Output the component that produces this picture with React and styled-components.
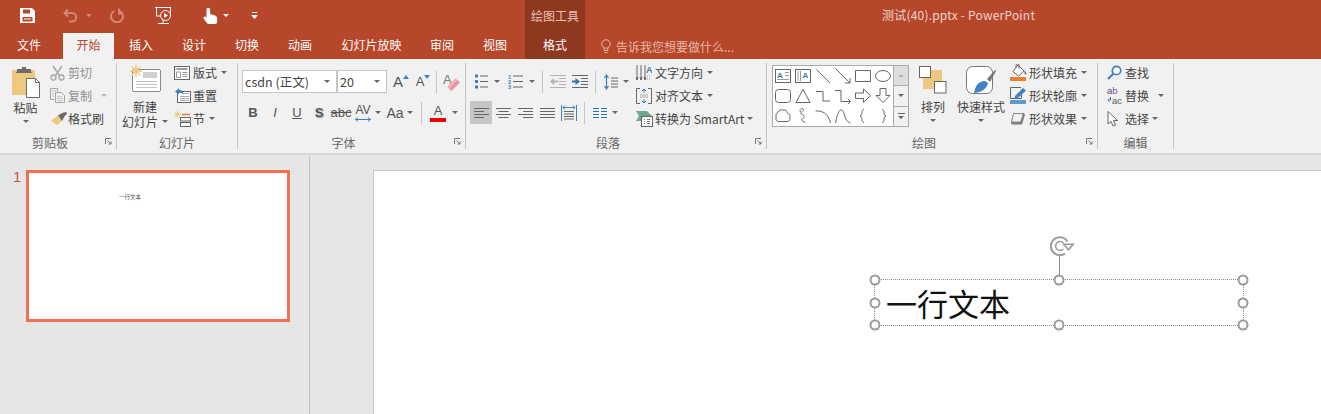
import styled, { createGlobalStyle } from "styled-components";

const RED = "#b7472a";
const INK = "#444";
const BLUE = "#3f7fbf";
const GOLD = "#edc87e";
const ORANGE = "#ed7d31";

const GlobalStyle = createGlobalStyle`
  html, body { margin: 0; padding: 0; background: #e6e6e6; }
  * { box-sizing: border-box; }
  body { font-family: "Noto Sans CJK SC", "Noto Sans", sans-serif; font-size: 12px; color: ${INK}; }
`;

const Page = styled.div`
  width: 1321px;
  height: 414px;
  overflow: hidden;
  display: flex;
  flex-direction: column;
  background: #e6e6e6;
`;

const Header = styled.header`
  height: 59px;
  background: ${RED};
  flex: none;
`;

const TitleRow = styled.div`
  height: 33px;
  display: flex;
`;

const Qat = styled.div`
  width: 525px;
  display: flex;
  align-items: center;
  padding-left: 20px;
  padding-bottom: 2px;
`;

const QatSlot = styled.span`
  display: flex;
  align-items: center;
  margin-left: ${({ $ml }) => $ml || 0}px;
`;

const ContextLabel = styled.div`
  width: 60px;
  background: #8f3820;
  color: #ecc2b4;
  text-align: center;
  line-height: 31px;
`;

const WindowTitle = styled.div`
  padding-left: 297px;
  line-height: 29px;
  letter-spacing: 0.2px;
  color: #f0d3ca;
`;

const TabRow = styled.nav`
  height: 26px;
  display: flex;
  align-items: stretch;
`;

const Tab = styled.div`
  width: ${({ $w }) => $w}px;
  margin-right: ${({ $mr }) => $mr || 0}px;
  text-align: center;
  line-height: 24px;
  color: ${({ $active }) => ($active ? RED : "#fff")};
  background: ${({ $active, $context }) => ($active ? "#f1f1f1" : $context ? "#8f3820" : "transparent")};
`;

const TellMe = styled.div`
  display: flex;
  align-items: center;
  gap: 5px;
  margin-left: 16px;
  color: #e9b7a7;
`;

const Ribbon = styled.div`
  height: 96px;
  flex: none;
  display: flex;
  align-items: flex-start;
  padding-top: 3px;
  background: #f1f1f1;
  border-bottom: 2px solid #d6d6d6;
`;

const Divider = styled.div`
  width: 1px;
  height: 86px;
  margin-top: 1px;
  flex: none;
  background: #c6c6c6;
`;

const Group = styled.section`
  width: ${({ $w }) => $w}px;
  height: 88px;
  flex: none;
  display: flex;
  flex-direction: column;
`;

const GroupBody = styled.div`
  height: 69px;
  display: flex;
  padding-left: ${({ $pl }) => $pl || 0}px;
`;

const GroupFooter = styled.div`
  height: 19px;
  display: flex;
  align-items: flex-end;
`;

const GroupLabel = styled.div`
  flex: 1;
  text-align: center;
  line-height: 14px;
  color: #666;
`;

const Launcher = styled.div`
  width: 16px;
  height: 15px;
  padding-bottom: 3px;
  display: flex;
  align-items: center;
  justify-content: center;
`;

const LargeButton = styled.div`
  width: ${({ $w }) => $w}px;
  margin-left: ${({ $ml }) => $ml || 0}px;
  flex: none;
  display: flex;
  flex-direction: column;
  align-items: center;
  padding-top: ${({ $pt }) => $pt || 4}px;
`;

const LargeIcon = styled.div`
  height: ${({ $h }) => $h}px;
  display: flex;
  align-items: flex-start;
`;

const LargeText = styled.div`
  line-height: 15px;
  white-space: nowrap;
  display: flex;
  align-items: center;
`;

const CaretLine = styled.div`
  height: ${({ $h }) => $h || 12}px;
  display: flex;
  align-items: center;
`;

const SmallColumn = styled.div`
  display: flex;
  flex-direction: column;
  margin-top: -1px;
  margin-left: ${({ $ml }) => $ml || 0}px;
`;

const SmallButton = styled.div`
  height: 23px;
  display: flex;
  align-items: center;
  white-space: nowrap;
  color: ${({ $off }) => ($off ? "#8f8f8f" : INK)};
`;

const Slot = styled.span`
  width: ${({ $w }) => $w || 19}px;
  flex: none;
  display: flex;
  justify-content: flex-start;
  align-items: center;
`;

const Caret = styled.span`
  display: inline-block;
  flex: none;
  width: 0;
  height: 0;
  margin-left: ${({ $ml }) => $ml || 0}px;
  border-left: 3px solid transparent;
  border-right: 3px solid transparent;
  border-top: 3px solid ${({ $color }) => $color || "#666"};
`;

const ToolStack = styled.div`
  display: flex;
  flex-direction: column;
  gap: 8px;
  padding-top: 8px;
  width: ${({ $w }) => ($w ? `${$w}px` : "auto")};
  flex: none;
`;

const ToolRow = styled.div`
  height: 23px;
  display: flex;
  align-items: center;
`;

const Cell = styled.span`
  width: ${({ $w }) => $w || 22}px;
  height: 23px;
  margin-left: ${({ $ml }) => $ml || 0}px;
  flex: none;
  display: flex;
  align-items: center;
  justify-content: center;
  background: ${({ $on }) => ($on ? "#c6c6c6" : "transparent")};
`;

const ToolSep = styled.span`
  width: 1px;
  height: 22px;
  margin-left: ${({ $ml }) => $ml || 0}px;
  flex: none;
  background: #c6c6c6;
`;

const FontBox = styled.div`
  width: ${({ $w }) => $w}px;
  height: 23px;
  flex: none;
  display: flex;
  align-items: center;
  justify-content: space-between;
  padding: 0 6px 0 2px;
  background: #fff;
  border: 1px solid #c6c6c6;
  font-size: 12.5px;
  color: #444;
`;

const Glyph = styled.span`
  font-family: "Liberation Sans", sans-serif;
  font-size: ${({ $size }) => $size || 13}px;
  font-weight: ${({ $bold }) => ($bold ? 700 : 400)};
  font-style: ${({ $italic }) => ($italic ? "italic" : "normal")};
  text-decoration: ${({ $deco }) => $deco || "none"};
  text-shadow: ${({ $shadow }) => ($shadow ? "1px 1px 1px #999" : "none")};
  color: #555;
  line-height: 1;
`;

const TopMark = styled.span`
  display: flex;
  margin-bottom: 9px;
`;

const StackedGlyph = styled.span`
  display: flex;
  flex-direction: column;
  align-items: center;
  gap: 1px;
`;

const Swatch = styled.span`
  width: 16px;
  height: 4px;
  background: ${({ $color }) => $color};
`;

const Gallery = styled.div`
  display: flex;
  margin-top: 3px;
  height: 62px;
  border: 1px solid #ababab;
  flex: none;
`;

const ShapeGrid = styled.div`
  display: grid;
  grid-template-columns: repeat(6, 20px);
  grid-auto-rows: 20px;
  background: #fff;
  width: 121px;
  border-right: 1px solid #ababab;
`;

const ShapeCell = styled.div`
  display: flex;
  align-items: center;
  justify-content: center;
`;

const GalleryScroll = styled.div`
  width: 14px;
  display: flex;
  flex-direction: column;
`;

const ScrollButton = styled.div`
  flex: 1;
  display: flex;
  flex-direction: column;
  align-items: center;
  justify-content: center;
  gap: 2px;
  background: ${({ $off }) => ($off ? "#dedede" : "#f1f1f1")};
  border-bottom: ${({ $last }) => ($last ? "none" : "1px solid #ababab")};
`;

const ScrollBar = styled.span`
  width: 7px;
  height: 1px;
  background: #666;
`;

const UpCaret = styled.span`
  width: 0;
  height: 0;
  border-left: 3px solid transparent;
  border-right: 3px solid transparent;
  border-bottom: 3px solid #b5b5b5;
`;

const Workspace = styled.main`
  flex: 1;
  display: flex;
  min-height: 0;
`;

const ThumbPane = styled.aside`
  width: 310px;
  flex: none;
  display: flex;
  margin-top: 1px;
  padding: 14px 0 0 13px;
  border-right: 1px solid #c2c2c2;
`;

const ThumbNumber = styled.div`
  width: 13px;
  margin-top: -1px;
  font-family: "Liberation Sans", sans-serif;
  font-size: 15px;
  line-height: 15px;
  color: #c8553a;
`;

const Thumb = styled.div`
  width: 264px;
  height: 152px;
  background: #fff;
  border: 3px solid #f0704f;
  padding: 21px 0 0 90px;
  font-size: 5.5px;
  line-height: 6px;
  color: #555;
`;

const Stage = styled.div`
  flex: 1;
  padding: 15px 0 0 63px;
`;

const Slide = styled.div`
  position: relative;
  height: 100%;
  background: #fff;
  border-left: 1px solid #c6c6c6;
  border-top: 1px solid #c6c6c6;
`;

const TextBox = styled.div`
  position: absolute;
  left: 500px;
  top: 108px;
  width: 370px;
  height: 47px;
  border: 1px dotted #8e8e8e;
  padding-left: 11px;
  font-size: 31px;
  line-height: 45px;
  color: #111;
`;

const Handle = styled.span`
  position: absolute;
  left: ${({ $x }) => $x}%;
  top: ${({ $y }) => $y}%;
  width: 11px;
  height: 11px;
  transform: translate(-50%, -50%);
  background: #fff;
  border: 2px solid #999;
  border-radius: 50%;
`;

const RotateStem = styled.span`
  position: absolute;
  left: 50%;
  top: -24px;
  width: 1px;
  height: 20px;
  background: #8e8e8e;
`;

const RotateIcon = styled.span`
  position: absolute;
  left: calc(50% - 9px);
  top: -44px;
  display: flex;
`;

const Svg = ({ w, h, children, ...rest }) => (
  <svg width={w} height={h} viewBox={`0 0 ${w} ${h}`} style={{ display: "block", flex: "none" }} {...rest}>
    {children}
  </svg>
);

const SaveIcon = () => (
  <Svg w={15} h={15}>
    <path d="M0 0h12l3 3v12H0z" fill="#fff" />
    <path d="M3 1.5h7v4H3zM2.5 9h10v4.5h-10z" fill={RED} />
    <path d="M4 10.5h7v1H4z" fill="#fff" />
  </Svg>
);

const UndoIcon = () => (
  <Svg w={15} h={15}>
    <path d="M5 1.5 1.5 5 5 8.5M2 5h7a4 4 0 0 1 0 8.5H6" fill="none" stroke="#d08a75" strokeWidth="2" />
  </Svg>
);

const RedoIcon = () => (
  <Svg w={15} h={15}>
    <path d="M5.5 2.8a6 6 0 1 0 5 0M10 0.5v5h4" fill="none" stroke="#d08a75" strokeWidth="2" />
  </Svg>
);

const ShowIcon = () => (
  <Svg w={17} h={17}>
    <path d="M0 .5h16M1.5 1v8h14V1M8 12v4M3 16.5h11" fill="none" stroke="#fff" />
    <circle cx="10.5" cy="8.5" r="5" fill={RED} stroke="#fff" />
    <path d="M9 6v5l4-2.5z" fill="#fff" />
  </Svg>
);

const TouchIcon = () => (
  <Svg w={15} h={17}>
    <path d="M3.5 8V2.5a1.8 1.8 0 0 1 3.6 0V7l5 1.5c1.5.5 2 1.5 2 3V15c0 1-.7 2-2 2H6c-1 0-1.7-.5-2.3-1.3L.6 11.5C0 10 1.8 9 3 10l.5.5z" fill="#fff" />
  </Svg>
);

const CustomizeIcon = () => (
  <Svg w={7} h={8}>
    <path d="M1 .5h5" stroke="#fff" />
    <path d="M0 3h7L3.5 7z" fill="#fff" />
  </Svg>
);

const BulbIcon = () => (
  <Svg w={10} h={15}>
    <circle cx="5" cy="5" r="4.2" fill="none" stroke="#e9b7a7" />
    <path d="M3.2 9v2.5h3.6V9M3.5 13.5h3" fill="none" stroke="#e9b7a7" />
  </Svg>
);

const LauncherIcon = () => (
  <Svg w={7} h={7}>
    <path d="M.5 6V.5H6" fill="none" stroke="#777" />
    <path d="M2.5 2.5 6 6M6 3.5V6H3.5" fill="none" stroke="#777" />
  </Svg>
);

const PasteIcon = () => (
  <Svg w={30} h={32}>
    <rect x="1" y="4" width="23" height="25" fill={GOLD} />
    <path d="M6 5V3h5V1h4v2h5v2l1 2H5z" fill="#6b6b6b" />
    <path d="M15.5 12.5h9l4 4v15h-13z" fill="#fff" stroke="#6b6b6b" />
    <path d="M24.5 12.5v4h4" fill="none" stroke="#6b6b6b" />
  </Svg>
);

const CutIcon = () => (
  <Svg w={15} h={16}>
    <path d="M3 1l6.5 9.5M12 1 5.5 10.5" fill="none" stroke="#a6a6a6" strokeWidth="1.4" />
    <circle cx="3.5" cy="12.5" r="2.5" fill="none" stroke="#a6a6a6" strokeWidth="1.3" />
    <circle cx="11.5" cy="12.5" r="2.5" fill="none" stroke="#a6a6a6" strokeWidth="1.3" />
  </Svg>
);

const CopyIcon = () => (
  <Svg w={15} h={15}>
    <path d="M.5.5h7v3M.5.5v11h4" fill="none" stroke="#a6a6a6" />
    <path d="M5.5 4.5h6l3 3v7h-9z" fill="#f1f1f1" stroke="#a6a6a6" />
    <path d="M2 3h4M2 5.5h2M2 8h2M7 8.5h5M7 10.5h6M7 12.5h6" stroke="#c4c4c4" />
  </Svg>
);

const PainterIcon = () => (
  <Svg w={17} h={14}>
    <path d="M1 8.5 8 3.5l4 5.5-5 4z" fill={GOLD} />
    <path d="M8 3.5 12 1l4-1 1 1.5-2.5 3L12 9z" fill="#6b6b6b" />
  </Svg>
);

const NewSlideIcon = () => (
  <Svg w={31} h={28}>
    <rect x="2.5" y="4.5" width="28" height="22" rx="1.5" fill="#fff" stroke="#8a8a8a" />
    <rect x="13" y="7" width="14" height="6" fill="#cfcfcf" />
    <path d="M6 16.5h21M6 19.5h21M6 22.5h21" stroke="#c4c4c4" />
    <path d="M6 0v12M0 6h12M1.8 1.8l8.4 8.4M10.2 1.8l-8.4 8.4" stroke={GOLD} strokeWidth="1.6" />
  </Svg>
);

const LayoutIcon = () => (
  <Svg w={16} h={14}>
    <rect x=".5" y=".5" width="15" height="13" fill="#fff" stroke="#666" />
    <path d="M2.5 3h11" stroke="#999" strokeWidth="2" />
    <path d="M2.5 6h4v5.500h-4zM8.5 6.500h5M8.5 8.500h5M8.5 10.500h5" fill="none" stroke="#999" />
  </Svg>
);

const ResetIcon = () => (
  <Svg w={17} h={15}>
    <rect x="3.5" y="3.5" width="13" height="11" fill="#fff" stroke="#666" />
    <path d="M10 5.5h5M6 8.5h9M6 10.5h9M6 12.5h9" stroke="#aaa" />
    <path d="M5 .5 1 3.500l4 3V4.800c2.500 0 4 .7 5 2.200C9.500 3 7.500 2 5 2z" fill={BLUE} />
  </Svg>
);

const SectionIcon = () => (
  <Svg w={17} h={16}>
    <path d="M8 3.5h8" stroke={ORANGE} strokeWidth="1.5" />
    <rect x="6.5" y="6.5" width="10" height="3.5" fill="#fff" stroke="#666" />
    <rect x="6.5" y="11.5" width="10" height="4" fill="#fff" stroke="#666" />
    <path d="M3.5 0v7M0 3.5h7M1 1l5 5M6 1 1 6" stroke={GOLD} />
  </Svg>
);

const GrowIcon = ({ up }) => (
  <Svg w={6} h={4}>
    <path d={up ? "M3 0l3 4H0z" : "M0 0h6L3 4z"} fill={BLUE} />
  </Svg>
);

const EraserIcon = () => (
  <Svg w={17} h={18}>
    <text x="0" y="11" fontFamily="Liberation Sans" fontSize="13" fill="#777">A</text>
    <path d="M4.500 13.500 12.500 5.500l4.500 4-8 8H7.500z" fill="#ef94a4" />
    <path d="M4.500 13.500 12.500 5.500l1.500 1.500-7.500 8z" fill="#f3b4be" />
  </Svg>
);

const SpacingArrow = () => (
  <Svg w={16} h={5}>
    <path d="M.5 2.5h15M3 .5l-2.500 2L3 4.500M13 .5l2.500 2-2.500 2" fill="none" stroke={BLUE} />
  </Svg>
);

const BulletsIcon = () => (
  <Svg w={14} h={15}>
    <path d="M1 .5h3v3H1zM1 6h3v3H1zM1 11.5h3v3H1z" fill={BLUE} />
    <path d="M6 2h8M6 7.5h8M6 13h8" stroke="#666" />
  </Svg>
);

const NumberedIcon = () => (
  <Svg w={15} h={15}>
    <text x="0" y="5" fontFamily="Liberation Sans" fontWeight="700" fontSize="5.5" fill={BLUE}>1</text>
    <text x="0" y="10" fontFamily="Liberation Sans" fontWeight="700" fontSize="5.5" fill={BLUE}>2</text>
    <text x="0" y="15" fontFamily="Liberation Sans" fontWeight="700" fontSize="5.5" fill={BLUE}>3</text>
    <path d="M5 2h10M5 7.5h10M5 13h10" stroke="#666" />
  </Svg>
);

const IndentIcon = ({ increase }) => (
  <Svg w={16} h={13}>
    <path d="M0 .5h16M9 3.5h7M9 6.5h7M9 9.5h7M0 12.5h16" stroke={increase ? "#666" : "#b3b3b3"} />
    <path
      d={increase ? "M0 5.5h3.500V3L8 6.500 3.500 10V7.500H0z" : "M8 5.5H4V3L0 6.500 4 10V7.500h4z"}
      fill={increase ? "#2e75b6" : "#b3b3b3"}
    />
  </Svg>
);

const LineSpacingIcon = () => (
  <Svg w={14} h={16}>
    <path d="M2.5 1v14M.5 4l2-3 2 3M.5 12l2 3 2-3" fill="none" stroke={BLUE} strokeWidth="1.2" />
    <path d="M7 4h7M7 7h7M7 10h7M7 13h7" stroke="#666" />
  </Svg>
);

const AlignIcon = ({ kind }) => {
  const lines = {
    left: "M0 .5h15M0 3.5h10M0 6.5h15M0 9.5h10",
    center: "M0 .5h15M2.5 3.5h10M0 6.5h15M2.5 9.5h10",
    right: "M0 .5h15M5 3.5h10M0 6.5h15M5 9.5h10",
    justify: "M0 .5h15M0 3.5h15M0 6.5h15M0 9.5h15",
  };
  return (
    <Svg w={15} h={10}>
      <path d={lines[kind]} stroke="#666" />
    </Svg>
  );
};

const DistributeIcon = () => (
  <Svg w={16} h={16}>
    <path d="M.5 0v16M15.5 0v16" stroke={BLUE} />
    <path d="M2 2.5h12M4 .5l-2 2 2 2M12 .5l2 2-2 2" fill="none" stroke={BLUE} />
    <path d="M3 6.5h10M3 9h10M3 11.500h10M3 14h10" stroke="#666" />
  </Svg>
);

const ColumnsIcon = () => (
  <Svg w={14} h={10}>
    <path d="M0 .5h6M8 .5h6M0 3.5h6M8 3.5h6M0 6.5h6M8 6.5h6M0 9.5h6M8 9.5h6" stroke="#2e75b6" />
  </Svg>
);

const TextDirIcon = () => (
  <Svg w={16} h={16}>
    <path d="M1 0v15M5 0v15M9 0v15" stroke="#666" />
    <path d="M0 12l1 3 1-3M4 12l1 3 1-3M8 12l1 3 1-3" fill="none" stroke="#666" />
    <text x="10" y="8" fontFamily="Liberation Sans" fontWeight="700" fontSize="9" fill={BLUE}>A</text>
    <path d="M11 11h4M11 14h4" stroke="#999" strokeDasharray="1 1" />
  </Svg>
);

const AlignTextIcon = () => (
  <Svg w={16} h={16}>
    <path d="M4 .5H.5v15H4M12 .5h3.500v15H12" fill="none" stroke="#666" />
    <path d="M8 1v4M6 3l2-2 2 2M8 15v-4M6 13l2 2 2-2" fill="none" stroke={BLUE} />
    <path d="M4 7h8M4 9h8" stroke="#aaa" />
  </Svg>
);

const SmartArtIcon = () => (
  <Svg w={17} h={16}>
    <path d="M0 0h11l5 5H8L5 10H0l3-5z" fill="#6fa68f" />
    <rect x="5.5" y="5.5" width="11" height="10" fill="#fff" stroke="#666" />
    <path d="M8 8.5h1M11 8.5h3M8 10.5h1M11 10.5h3M8 12.5h1M11 12.5h3" stroke="#777" />
  </Svg>
);

const ArrangeIcon = () => (
  <Svg w={28} h={28}>
    <rect x="4" y="4" width="19" height="19" fill={GOLD} />
    <rect x=".5" y=".5" width="11" height="11" fill="#fff" stroke="#666" />
    <rect x="15.5" y="15.5" width="11.5" height="11.5" fill="#fff" stroke="#666" />
  </Svg>
);

const QuickStyleIcon = () => (
  <Svg w={30} h={30}>
    <rect x=".5" y=".5" width="26" height="27" rx="6" fill="#fff" stroke="#777" />
    <path d="M21 13 29 4l1 1-6 11z" fill="#777" />
    <path d="M9 23c2-6 6-8 10-8l3 2c-1 5-5 9-14 10z" fill="#3f83c4" />
  </Svg>
);

const FillIcon = () => (
  <Svg w={17} h={17}>
    <path d="M8 1 14 7 8.500 12 3 7.500z" fill="#fff" stroke="#666" />
    <path d="M6 3.5V1.500a1.500 1.500 0 0 1 3 0v3" fill="none" stroke="#666" />
    <path d="M14.5 6c1 1.500 2 2.500 2 3.500a1 1 0 0 1-2 0z" fill={BLUE} />
    <path d="M0 13h16v4H0z" fill={ORANGE} />
  </Svg>
);

const OutlineIcon = () => (
  <Svg w={17} h={17}>
    <path d="M11 .5H.5v11h11V6" fill="none" stroke="#666" />
    <path d="M5 9 13 1l3 2.500-8 7.500-3.500 1z" fill="#3f83c4" />
    <path d="M0 13h16v4H0z" fill="#5b9bd5" />
  </Svg>
);

const EffectIcon = () => (
  <Svg w={16} h={14}>
    <path d="M4 1h9.500L15 2.500 12 12.500H1.500L1 10z" fill="#7f7f7f" />
    <path d="M3.5 1.500h8.500L13 3l-2.500 7H1.500z" fill="#f1f1f1" stroke="#888" />
  </Svg>
);

const FindIcon = () => (
  <Svg w={15} h={15}>
    <circle cx="9.5" cy="5.5" r="4.2" fill="#fff" stroke={BLUE} strokeWidth="1.7" />
    <path d="M6.5 8.5 1 14" stroke={BLUE} strokeWidth="2.2" />
  </Svg>
);

const ReplaceIcon = () => (
  <Svg w={17} h={19}>
    <text x="0" y="8" fontFamily="Liberation Sans" fontSize="9.5">
      <tspan fill="#555">a</tspan>
      <tspan fill="#8a4fb0">b</tspan>
    </text>
    <text x="5" y="18" fontFamily="Liberation Sans" fontSize="9.5" fill="#555">ac</text>
    <path d="M3.5 11v3H1M2.500 12.500 1 14l1.500 1.500" fill="none" stroke={BLUE} />
  </Svg>
);

const PointerIcon = () => (
  <Svg w={11} h={16}>
    <path d="M1 .5v12.500l3-2.500 2 4.500 2.500-1-2-4.500h4z" fill="#fff" stroke="#666" />
  </Svg>
);

const RotateHandleIcon = () => (
  <Svg w={26} h={21}>
    <path d="M17.500 5.500A9 9 0 1 0 15 17.500" fill="none" stroke="#9a9a9a" strokeWidth="2" />
    <path d="M13.500 7A4.500 4.500 0 1 0 13.500 13" fill="none" stroke="#9a9a9a" strokeWidth="1.5" />
    <path d="M12 7.500h13l-6.500 7.500z" fill="#9a9a9a" />
    <path d="M15.500 9h6l-3 3.500z" fill="#fff" />
  </Svg>
);

const BoxA = ({ vertical }) => (
  <Svg w={16} h={14}>
    <rect x=".5" y=".5" width="15" height="13" fill="none" stroke="#666" />
    {vertical ? (
      <path d="M3 2v10M5.500 2v10" stroke="#999" />
    ) : (
      <path d="M10 3.500h4M10 6.500h4M2 10.500h12" stroke="#999" />
    )}
    <text x={vertical ? 7.5 : 2} y="8.500" fontFamily="Liberation Sans" fontWeight="700" fontSize="8" fill={BLUE}>A</text>
  </Svg>
);

const shapePaths = [
  "M1.5 1.5 15 15",
  "M.5.5 15 15M15 10v5h-5",
  "M.5 2.5h15v11H.5z",
  null,
  null,
  "M3.5 1.5h9a3 3 0 0 1 3 3v7a3 3 0 0 1-3 3h-9a3 3 0 0 1-3-3v-7a3 3 0 0 1 3-3z",
  "M8 1.5 15 14.500H1z",
  "M1 3.5h7v9.500h7",
  "M0 2.5h6v11h9M13 11l2.500 2.500L13 16",
  "M.5 5h8V1l7 6.500-7 7v-4h-8z",
  "M5 .5h6v7h4l-7 7-7-7h4z",
  "M1 6 5 2h5c2 0 1.500 3 3 3.500s2 1 2 3v2c0 2-1 3-3 3H2.500L1 12z",
  "M7 .5c3 1 1 3-1 4-2 2 5 2 3 5-1 1.500-3 1-2 3 .5 1 3 1 3 2.500M7 .5C5 1 4 3 6 4",
  "M.5 3C7 2.500 13 5 15.500 15",
  "M.5 15C4-3 8 .5 9.500 7c1 4 2.500 7 6 8",
  "M9 1.5C5.500 1.500 8.500 7.500 5 8c3.500.5.5 6.500 4 6.500",
  "M7 1.5c3.500 0 .5 6 4 6.500-3.500.5-.5 6.500-4 6.500",
];

const ShapeIcon = ({ index }) => {
  if (index === 0) return <BoxA />;
  if (index === 1) return <BoxA vertical />;
  return (
    <Svg w={16} h={16}>
      {index === 5 ? (
        <ellipse cx="8" cy="8" rx="7.5" ry="5.5" fill="none" stroke="#666" />
      ) : (
        <path d={shapePaths[index - 2]} fill="none" stroke="#666" />
      )}
    </Svg>
  );
};

const shapes = [0, 1, 2, 3, 4, 5, 7, 8, 9, 10, 11, 12, 13, 14, 15, 16, 17, 18];
const handles = [
  [0, 0], [50, 0], [100, 0],
  [0, 50], [100, 50],
  [0, 100], [50, 100], [100, 100],
];

function GalleryShapes() {
  return (
    <Gallery>
      <ShapeGrid>
        {shapes.map((s) => (
          <ShapeCell key={s}>
            <ShapeIcon index={s} />
          </ShapeCell>
        ))}
      </ShapeGrid>
      <GalleryScroll>
        <ScrollButton $off>
          <UpCaret />
        </ScrollButton>
        <ScrollButton>
          <Caret />
        </ScrollButton>
        <ScrollButton $last>
          <ScrollBar />
          <Caret />
        </ScrollButton>
      </GalleryScroll>
    </Gallery>
  );
}

export default function App() {
  return (
    <Page>
      <GlobalStyle />
      <Header>
        <TitleRow>
          <Qat>
            <SaveIcon />
            <QatSlot $ml={28}><UndoIcon /></QatSlot>
            <Caret $ml={8} $color="#d08a75" />
            <QatSlot $ml={17}><RedoIcon /></QatSlot>
            <QatSlot $ml={31}><ShowIcon /></QatSlot>
            <QatSlot $ml={31}><TouchIcon /></QatSlot>
            <Caret $ml={5} $color="#fff" />
            <QatSlot $ml={22}><CustomizeIcon /></QatSlot>
          </Qat>
          <ContextLabel>绘图工具</ContextLabel>
          <WindowTitle>测试(40).pptx - PowerPoint</WindowTitle>
        </TitleRow>
        <TabRow>
          <Tab $w={58} $mr={5}>文件</Tab>
          <Tab $w={51} $active>开始</Tab>
          <Tab $w={54}>插入</Tab>
          <Tab $w={52}>设计</Tab>
          <Tab $w={54}>切换</Tab>
          <Tab $w={52}>动画</Tab>
          <Tab $w={91}>幻灯片放映</Tab>
          <Tab $w={50}>审阅</Tab>
          <Tab $w={56} $mr={2}>视图</Tab>
          <Tab $w={60} $context>格式</Tab>
          <TellMe>
            <BulbIcon />
            告诉我您想要做什么...
          </TellMe>
        </TabRow>
      </Header>

      <Ribbon>
        <Group $w={116}>
          <GroupBody $pl={1}>
            <LargeButton $w={49}>
              <LargeIcon $h={34}><PasteIcon /></LargeIcon>
              <LargeText>粘贴</LargeText>
              <CaretLine><Caret /></CaretLine>
            </LargeButton>
            <SmallColumn>
              <SmallButton $off><Slot $w={18}><CutIcon /></Slot>剪切</SmallButton>
              <SmallButton $off><Slot $w={18}><CopyIcon /></Slot>复制<Caret $ml={9} $color="#b5b5b5" /></SmallButton>
              <SmallButton><Slot $w={18}><PainterIcon /></Slot>格式刷</SmallButton>
            </SmallColumn>
          </GroupBody>
          <GroupFooter>
            <GroupLabel>剪贴板</GroupLabel>
            <Launcher><LauncherIcon /></Launcher>
          </GroupFooter>
        </Group>
        <Divider />

        <Group $w={120}>
          <GroupBody $pl={2}>
            <LargeButton $w={52} $pt={3}>
              <LargeIcon $h={34}><NewSlideIcon /></LargeIcon>
              <LargeText>新建</LargeText>
              <LargeText>幻灯片<Caret $ml={4} /></LargeText>
            </LargeButton>
            <SmallColumn $ml={3}>
              <SmallButton><Slot><LayoutIcon /></Slot>版式<Caret $ml={4} /></SmallButton>
              <SmallButton><Slot><ResetIcon /></Slot>重置</SmallButton>
              <SmallButton><Slot><SectionIcon /></Slot>节<Caret $ml={4} /></SmallButton>
            </SmallColumn>
          </GroupBody>
          <GroupFooter>
            <GroupLabel>幻灯片</GroupLabel>
          </GroupFooter>
        </Group>
        <Divider />

        <Group $w={227}>
          <GroupBody $pl={4}>
            <ToolStack>
              <ToolRow>
                <FontBox $w={95}>csdn (正文)<Caret /></FontBox>
                <FontBox $w={50}>20<Caret /></FontBox>
                <Cell $ml={3} $w={22}>
                  <Glyph $size={15}>A</Glyph><TopMark><GrowIcon up /></TopMark>
                </Cell>
                <Cell $w={22}>
                  <Glyph $size={13}>A</Glyph><TopMark><GrowIcon /></TopMark>
                </Cell>
                <ToolSep $ml={2} />
                <Cell $ml={6} $w={17}><EraserIcon /></Cell>
              </ToolRow>
              <ToolRow>
                <Cell><Glyph $bold>B</Glyph></Cell>
                <Cell><Glyph $italic>I</Glyph></Cell>
                <Cell><Glyph $deco="underline">U</Glyph></Cell>
                <Cell><Glyph $bold $shadow>S</Glyph></Cell>
                <Cell><Glyph $deco="line-through">abc</Glyph></Cell>
                <Cell>
                  <StackedGlyph>
                    <Glyph $size={12}>AV</Glyph>
                    <SpacingArrow />
                  </StackedGlyph>
                </Cell>
                <Caret $ml={1} />
                <Cell $ml={3} $w={22}><Glyph $size={14}>Aa</Glyph></Cell>
                <Caret $ml={1} />
                <ToolSep $ml={8} />
                <Cell $ml={5} $w={22}>
                  <StackedGlyph>
                    <Glyph>A</Glyph>
                    <Swatch $color="#f00000" />
                  </StackedGlyph>
                </Cell>
                <Caret $ml={3} />
              </ToolRow>
            </ToolStack>
          </GroupBody>
          <GroupFooter>
            <GroupLabel>字体</GroupLabel>
            <Launcher><LauncherIcon /></Launcher>
          </GroupFooter>
        </Group>
        <Divider />

        <Group $w={300}>
          <GroupBody $pl={4}>
            <ToolStack $w={166}>
              <ToolRow>
                <Cell><BulletsIcon /></Cell>
                <Cell $w={10}><Caret /></Cell>
                <Cell $w={26}><NumberedIcon /></Cell>
                <Cell $w={7}><Caret /></Cell>
                <ToolSep $ml={7} />
                <Cell $ml={2} $w={26}><IndentIcon /></Cell>
                <Cell $w={18}><IndentIcon increase /></Cell>
                <ToolSep $ml={6} />
                <Cell $ml={4}><LineSpacingIcon /></Cell>
                <Cell $w={7}><Caret /></Cell>
              </ToolRow>
              <ToolRow>
                <Cell $on><AlignIcon kind="left" /></Cell>
                <Cell><AlignIcon kind="center" /></Cell>
                <Cell><AlignIcon kind="right" /></Cell>
                <Cell><AlignIcon kind="justify" /></Cell>
                <Cell><DistributeIcon /></Cell>
                <ToolSep $ml={4} />
                <Cell $ml={4}><ColumnsIcon /></Cell>
                <Cell $w={7}><Caret /></Cell>
              </ToolRow>
            </ToolStack>
            <SmallColumn>
              <SmallButton><Slot><TextDirIcon /></Slot>文字方向<Caret $ml={4} /></SmallButton>
              <SmallButton><Slot><AlignTextIcon /></Slot>对齐文本<Caret $ml={4} /></SmallButton>
              <SmallButton><Slot><SmartArtIcon /></Slot>转换为 SmartArt<Caret $ml={3} /></SmallButton>
            </SmallColumn>
          </GroupBody>
          <GroupFooter>
            <GroupLabel>段落</GroupLabel>
            <Launcher><LauncherIcon /></Launcher>
          </GroupFooter>
        </Group>
        <Divider />

        <Group $w={330}>
          <GroupBody $pl={5}>
            <GalleryShapes />
            <LargeButton $w={48}>
              <LargeIcon $h={33}><ArrangeIcon /></LargeIcon>
              <LargeText>排列</LargeText>
              <CaretLine $h={13}><Caret /></CaretLine>
            </LargeButton>
            <LargeButton $w={48}>
              <LargeIcon $h={33}><QuickStyleIcon /></LargeIcon>
              <LargeText>快速样式</LargeText>
              <CaretLine $h={13}><Caret /></CaretLine>
            </LargeButton>
            <SmallColumn $ml={5}>
              <SmallButton><Slot><FillIcon /></Slot>形状填充<Caret $ml={4} /></SmallButton>
              <SmallButton><Slot><OutlineIcon /></Slot>形状轮廓<Caret $ml={4} /></SmallButton>
              <SmallButton><Slot><EffectIcon /></Slot>形状效果<Caret $ml={4} /></SmallButton>
            </SmallColumn>
          </GroupBody>
          <GroupFooter>
            <GroupLabel>绘图</GroupLabel>
            <Launcher><LauncherIcon /></Launcher>
          </GroupFooter>
        </Group>
        <Divider />

        <Group $w={75}>
          <GroupBody $pl={9}>
            <SmallColumn>
              <SmallButton><Slot $w={18}><FindIcon /></Slot>查找</SmallButton>
              <SmallButton><Slot $w={18}><ReplaceIcon /></Slot>替换<Caret $ml={9} /></SmallButton>
              <SmallButton><Slot $w={18}><PointerIcon /></Slot>选择<Caret $ml={3} /></SmallButton>
            </SmallColumn>
          </GroupBody>
          <GroupFooter>
            <GroupLabel>编辑</GroupLabel>
          </GroupFooter>
        </Group>
        <Divider />
      </Ribbon>

      <Workspace>
        <ThumbPane>
          <ThumbNumber>1</ThumbNumber>
          <Thumb>一行文本</Thumb>
        </ThumbPane>
        <Stage>
          <Slide>
            <TextBox>
              一行文本
              <RotateIcon><RotateHandleIcon /></RotateIcon>
              <RotateStem />
              {handles.map(([x, y]) => (
                <Handle key={`${x}-${y}`} $x={x} $y={y} />
              ))}
            </TextBox>
          </Slide>
        </Stage>
      </Workspace>
    </Page>
  );
}
